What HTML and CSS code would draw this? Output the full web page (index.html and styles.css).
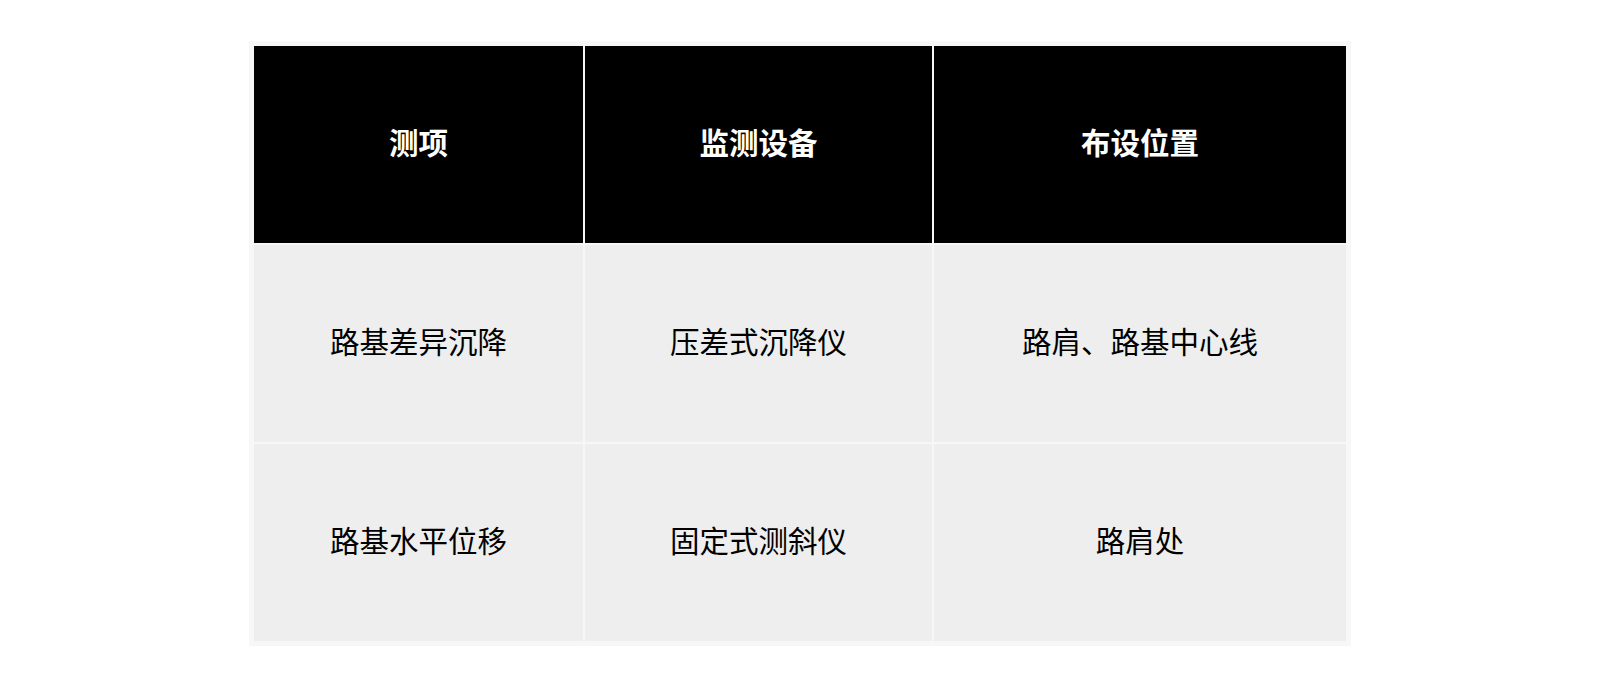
FILE: index.html
```html
<!DOCTYPE html>
<html lang="zh-CN">
<head>
<meta charset="utf-8">
<link rel="stylesheet" href="styles.css">
</head>
<body>
<div class="page">
  <table class="grid">
    <colgroup>
      <col class="c1"><col class="c2"><col class="c3">
    </colgroup>
    <thead>
      <tr><th>测项</th><th>监测设备</th><th>布设位置</th></tr>
    </thead>
    <tbody>
      <tr><td>路基差异沉降</td><td>压差式沉降仪</td><td>路肩、路基中心线</td></tr>
      <tr><td>路基水平位移</td><td>固定式测斜仪</td><td>路肩处</td></tr>
    </tbody>
  </table>
</div>
</body>
</html>
```
FILE: styles.css
```css
html, body {
  margin: 0;
  padding: 0;
  background: #ffffff;
}
body {
  font-family: "Noto Sans CJK SC", "Noto Sans", sans-serif;
}
.page {
  display: flex;
  justify-content: center;
  padding-top: 41px;
}
.grid {
  border-collapse: separate;
  border-spacing: 2px;
  padding: 3px;
  background: #f7f7f7;
  table-layout: fixed;
  width: 1102px;
}
.c1 { width: 329px; }
.c2 { width: 347px; }
.c3 { width: 412px; }
.grid th, .grid td {
  height: 197px;
  box-sizing: border-box;
  padding: 0 0 6px 0;
  text-align: center;
  vertical-align: middle;
  font-size: 29.5px;
  line-height: 1;
}
.grid th {
  background: #000000;
  color: #ffffff;
  font-weight: 700;
}
.grid td {
  background: #eeeeee;
  color: #000000;
  font-weight: 400;
}
```
